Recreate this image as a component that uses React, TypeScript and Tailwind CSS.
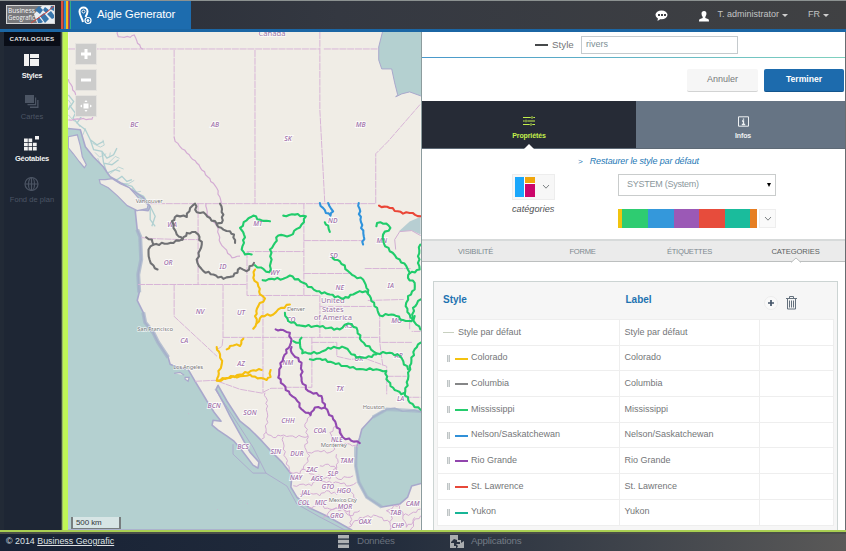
import React from "react";

const C = {
  green: "#20cc6b",
  grey: "#707174",
  yellow: "#f5bf0f",
  purple: "#9149b0",
  blue: "#2f93dc",
  red: "#ea4637",
};

/* Turns "x,y x,y" into a meandering path with small deterministic bends. */
function meander(points: string, amount = 3.2) {
  const p = points.split(" ").map((s) => s.split(",").map(Number));
  let d = `M${p[0][0]} ${p[0][1]}`;
  let k = 0;
  for (let i = 1; i < p.length; i++) {
    const [x0, y0] = p[i - 1];
    const [x1, y1] = p[i];
    const len = Math.hypot(x1 - x0, y1 - y0);
    const n = Math.max(1, Math.round(len / 9));
    for (let j = 1; j <= n; j++) {
      const t = j / n;
      const off = j === n ? 0 : Math.sin(k * 2.3 + i) * amount;
      const nx = len ? -(y1 - y0) / len : 0;
      const ny = len ? (x1 - x0) / len : 0;
      d += `L${(x0 + (x1 - x0) * t + nx * off).toFixed(1)} ${(y0 + (y1 - y0) * t + ny * off).toFixed(1)}`;
      k++;
    }
  }
  return d;
}

type Line = [string, string];

const westRivers: Line[] = [
  [C.grey, "258,113 275,120 280,135 330,130 367,120 380,100 405,97 415,105 425,135 415,160 412,190 430,215 460,225 490,238 520,230 540,205 560,215 582,190"],
  [C.grey, "280,135 265,150 268,180 280,198 292,210"],
  [C.grey, "367,120 350,105 340,85 335,65 350,48 380,52 390,25 405,12 410,38 430,38 450,55 470,72 485,70 490,45 480,12"],
  [C.grey, "470,75 490,90 510,95 522,105 525,130"],
  [C.yellow, "500,450 510,440 530,435 540,440 550,418"],
  [C.yellow, "470,443 480,465 485,495 475,515 475,530 470,544 540,526 580,513 605,512"],
  [C.yellow, "474,544 500,536 540,531 570,526 585,532 620,542 632,533 632,512"],
];

const eastRivers: Line[] = [
  [C.green, "130,48 165,45 198,50 185,75 150,108 115,108 105,130 90,150 95,180 88,218 45,197"],
  [C.green, "35,165 15,165 5,150 12,130 12,105 0,85 20,62 40,48 60,60 90,65"],
  [C.green, "68,242 95,238 130,238 150,228 190,250 230,275 270,285 310,298 340,285 360,275 385,280"],
  [C.green, "278,175 300,185 325,215 345,230 370,240 380,265 395,305 412,325 420,348 455,345 470,350 490,362 515,365 525,350"],
  [C.green, "255,68 265,78 270,97"],
  [C.green, "410,80 412,70 440,72 452,85 430,105 432,130 450,155 480,180 500,200 510,220 505,235 525,250 525,270 505,290 498,320 510,345 520,360 542,390"],
  [C.green, "542,135 535,170 540,210 510,222"],
  [C.green, "543,300 520,325 520,355"],
  [C.green, "135,340 145,365 180,378 240,382 300,390 325,372 350,385 365,425 410,462 450,460 480,470 505,510"],
  [C.green, "160,425 180,430 187,462 240,460 265,445 315,445 350,475 380,475 410,465"],
  [C.green, "185,415 180,430"],
  [C.green, "210,480 240,478 280,490 330,505 370,510 410,510 440,515 440,540 460,565 485,585 495,580 510,610 543,632"],
  [C.green, "543,430 525,450 510,500 505,540 495,585"],
  [C.yellow, "45,210 40,235 55,260 60,285 75,297 55,320 45,350 50,370 40,388"],
  [C.yellow, "50,372 65,350 100,345 115,330 150,315"],
  [C.purple, "107,390 130,392 150,400 153,430 130,475 118,510 115,535 150,585 172,605 185,630 212,648 225,625 255,625"],
  [C.purple, "155,443 155,460 185,490 185,545 205,575 245,590 255,625 280,660 310,715 360,732"],
  [C.blue, "240,10 258,40 272,48 280,35 265,10"],
  [C.blue, "357,10 362,60 372,110 370,135"],
  [C.red, "418,18 450,25 490,42 510,40 543,50"],
];

const straightBorders =
  "M68 49H320M324 49H379M174 50V138M255 50V204M320 32V110L325 204M150 204H376V154L388 142L421 104M141 238L152 239L182 240H198M198 204V285M138 285H247M174 285V317L217 357M223 285V338L222 347L217 350M223 338H380V343H413M247 252V296H304V204M247 252H304M304 296H320V338M320 307H372M304 241H365M304 274H352M365 269H411M368 301L404 300M380 313V343L383 366M263 296V394M263 393L271 389H283M312 338V388H285M312 343H337V357L350 360L365 359L387 367V395M387 377H407M195 382L215 381L240 390L263 394M405 398H421M410 315V330M421 332H412";

const wavyBorders = [
  "171,0 174,20 210,22 222,15 232,40 248,58",
  "342,322 345,335 380,370 410,400 470,475 484,520",
  "438,520 441,555 471,590 481,640 516,685 540,680",
  "24,148 46,195",
  "24,270 60,268 95,268 102,235",
];
const mexicoBorders = [
  "75,70 83,110 80,150 78,190 65,210",
  "78,188 100,205 122,200 140,202 205,202",
  "212,140 195,165 205,205 195,235 210,260 190,300 180,315 150,310",
  "130,202 130,240 150,310",
  "205,250 235,245 270,250 285,240 270,190 290,170 305,190 300,215",
  "300,220 330,225 355,235",
  "290,255 295,280 280,310 295,330 340,320",
  "240,290 265,285 290,300 270,330 220,315 185,300",
  "160,350 190,345 215,350 230,335 260,340 295,340 330,350 350,340",
  "180,375 220,375 240,380 260,365 290,375 330,365 350,390",
  "205,415 240,410 270,420 310,420 330,440 360,425",
  "250,445 280,420 330,425 335,470",
  "325,475 360,445 410,440 450,460",
  "450,485 455,440 440,425 480,405",
  "480,410 490,440 530,430 543,420",
  "490,440 500,475 543,440",
  "525,445 515,490",
];

const coast =
  "M60 128L80 130L85 147L93 157L103 167L107 173L110 177L127 187L143 198L150 207L148 211L140 210L135 211L137 230L140 237L141 260L138 275L139 293L137 301L143 313L145 323L153 333L158 343L168 358L170 365L177 368L188 370L195 382L201 392L207 402L214 413L221 422L213 421L212 426L218 431L227 437L234 442L241 450L253 466L258 469L259 463L250 453L240 435L230 417L223 403L216 390L218 386L227 402L240 422L250 430L262 442L272 453L282 463L292 476L291 488L297 498L310 509L327 517L352 531H60Z";
const gulf =
  "M423 413L415 411L403 412L395 409L387 410L373 418L362 430L360 438L357 447L356 467L359 483L367 498L382 508L400 505L408 498L412 487L423 484Z";

const labels: [string, number, number][] = [
  ["BC", 134, 125], ["AB", 215, 125], ["SK", 288, 139], ["MB", 361, 125],
  ["WA", 172, 225], ["OR", 168, 263], ["ID", 223, 267], ["NV", 200, 312], ["CA", 184, 341],
  ["UT", 241, 313], ["MT", 258, 224], ["ND", 333, 221], ["SD", 334, 256], ["WY", 275, 273],
  ["NE", 340, 288], ["IA", 391, 286], ["MN", 382, 241], ["CO", 291, 320], ["MO", 397, 321],
  ["KS", 349, 326], ["AZ", 241, 364], ["NM", 288, 363], ["OK", 359, 359], ["AR", 399, 356],
  ["TX", 340, 389], ["LA", 401, 399], ["BCN", 214, 406], ["BCS", 243, 447], ["SON", 250, 413],
  ["CHH", 288, 421], ["COA", 320, 431], ["NLE", 337, 440], ["SIN", 276, 452], ["DUR", 297, 454],
  ["TAM", 347, 461], ["ZAC", 312, 470], ["SLP", 333, 474], ["NAY", 296, 478], ["AGS", 317, 479],
  ["GTO", 328, 487], ["HGO", 344, 491], ["JAL", 306, 493], ["COL", 304, 503], ["MIC", 321, 503],
  ["MOR", 345, 507], ["GRO", 337, 516], ["OAX", 365, 522], ["TAB", 396, 513], ["CHP", 398, 526],
  ["CAM", 413, 504],
];
const cities: [string, number, number, number][] = [
  ["Vancouver", 149, 203, 27], ["San Francisco", 155, 332, 36], ["Los Angeles", 188, 370, 30],
  ["Denver", 296, 312, 18], ["Houston", 374, 410, 22], ["Monterrey", 334, 448, 26], ["Mexico City", 343, 503, 28],
];

function MapView() {
  const inlets =
    "M24 195L40 215L30 230L45 250L38 265L60 290M30 225L24 240M45 250L62 262L50 280L75 300L90 330L110 345L130 335M90 330L100 360L125 365L140 385L160 375L170 355M125 365L130 400L155 405L175 390M130 400L140 430L165 420L180 425M140 445L170 450L185 440L200 455L215 450M185 460L215 470L230 490L250 500L270 530L285 560L275 590M255 510L270 540L270 570L285 590";
  const fjords =
    "M24 210L34 225M50 240L58 250M24 255L42 275M75 295L68 315M96 340L120 352L132 346L128 330M104 368L118 382L138 372M148 382L150 368M112 385L128 420M145 400L165 380L178 386M150 432L175 412L190 418M165 455L180 462L205 462L222 452M215 475L225 488L242 485";
  return (
    <svg className="block h-full w-full" viewBox="68 32 353 499" fontFamily="'Noto Sans', 'Open Sans', sans-serif">
      <rect x="68" y="32" width="353" height="499" fill="#f0ede6" />
      <g transform="translate(60 30) scale(.33333)" fill="none" stroke="#b0d0d1">
        <path d={inlets} strokeWidth="4" />
        <path d={fjords} strokeWidth="2.5" />
      </g>
      <g fill="#b4d0d0" stroke="#a9a8cc" strokeWidth="1.6" strokeLinejoin="round">
        <path d={coast} />
        <path d={gulf} />
        <path d="M383 31L379 47L379 60L382 69L392 69L395 83L398 95L396 97L402 94L410 92L421 96H424V31Z" strokeWidth="1" />
      </g>
      <path d="M399 232L410 222L421 217V235L412 231Z" fill="#a9c5cd" opacity=".8" />
      <path d="M396 250L395 240L400 232L412 231L421 236" fill="none" stroke="#d0aed2" />
      <g fill="#f0ede6" stroke="#a9a8cc" strokeWidth="1.2">
        <path d="M68 137L77 135L80 146L82 157L86 165L84 168L79 162L73 154L68 148Z" />
        <path d="M105 180L112 179L120 184L129 188L138 198L148 205L147 209L137 211L127 206L117 196L108 188L100 184L99 180Z" />
        <path d="M174 374L180 373L184 376M185 378L189 378L188 382L185 380Z" />
      </g>
      <path d="M188 414l1 1M217 510l1 1M247 504l1 1" stroke="#c5bfd0" />
      <path d="M143 313L145 323L153 333L158 343L168 358M137 230L140 237L141 260L138 275L139 293" fill="none" stroke="#a5b3c9" strokeWidth="4" opacity=".75" />
      <path d="M356 447L356 467L359 483L367 498L382 508M373 418L387 410L405 411L420 412" fill="none" stroke="#a5b8cb" strokeWidth="3.5" opacity=".7" />
      <path d="M215 390L225 405L238 425L253 448L266 474H253L233 455V445" fill="none" stroke="#a9a3cc" strokeWidth=".8" />
      <path d="M266 474L287 487L297 505L320 518L345 531" fill="none" stroke="#a9a3cc" strokeWidth=".8" />
      <path d={straightBorders} fill="none" stroke="#d8b5d7" strokeWidth="1" strokeDasharray="7 .8" />
      <g transform="translate(60 30) scale(.33333)" fill="none" stroke="#d4acd4" strokeWidth="3.6">
        {wavyBorders.map((b) => (
          <path key={b} d={meander(b, 2)} />
        ))}
      </g>
      <g transform="translate(240 370) scale(.33333)" fill="none" stroke="#d4acd4" strokeWidth="3">
        {mexicoBorders.map((b) => (
          <path key={b} d={meander(b, 4)} />
        ))}
      </g>
      <g fontSize="6.8" fontStyle="italic" fontWeight="500" fill="#a070aa" stroke="#fff" strokeWidth="1.8" strokeOpacity=".8" paintOrder="stroke" textAnchor="middle">
        {labels.map(([t, x, y]) => (
          <text key={t} x={x} y={y + 2.6}>{t}</text>
        ))}
      </g>
      <g fontSize="7.6" fill="#9a74a4" stroke="#fff" strokeWidth="1.5" strokeOpacity=".8" paintOrder="stroke" textAnchor="middle">
        <text x="272" y="36">Canada</text>
        <text x="333" y="304">United</text>
        <text x="333" y="312.5">States</text>
        <text x="333" y="321">of America</text>
      </g>
      <g fill="none" strokeWidth="6.3" strokeLinejoin="round" strokeLinecap="round">
        <g transform="translate(60 200) scale(.33333)">
          {westRivers.map(([c, p]) => <path key={p} d={meander(p)} stroke={c} />)}
        </g>
        <g transform="translate(240 200) scale(.33333)">
          {eastRivers.map(([c, p]) => <path key={p} d={meander(p)} stroke={c} />)}
        </g>
      </g>
      <g fontSize="6" fill="#777" stroke="#fff" strokeWidth="1.3" strokeOpacity=".7" paintOrder="stroke" textAnchor="middle">
        {cities.map(([t, x, y, w]) => (
          <text key={t} x={x} y={y} textLength={w}>{t}</text>
        ))}
      </g>
    </svg>
  );
}

function MapButton({ children }: { children: React.ReactNode }) {
  return (
    <div className="flex h-[22px] w-[22px] items-center justify-center border border-[#e5e3df] bg-[#cccccb]">
      <svg width="20" height="20" viewBox="0 0 20 20" fill="#fff">{children}</svg>
    </div>
  );
}

function SideItem({ label, active, children }: { label: string; active?: boolean; children: React.ReactNode }) {
  return (
    <div className={`flex h-[41.4px] flex-col items-center ${active ? "text-[#f2f2f2]" : "text-[#4c5564]"}`}>
      <svg width="16" height="16" viewBox="0 0 16 16" fill="currentColor">{children}</svg>
      <span className={`mt-[3px] whitespace-nowrap text-[7.5px] leading-[10px] ${active ? "font-bold tracking-[-0.25px]" : "tracking-[0.05px]"}`}>{label}</span>
    </div>
  );
}

function Sidebar() {
  return (
    <aside className="flex w-[61px] shrink-0 bg-[#1e2634]">
      <div className="w-1 shrink-0 bg-[#222a36]" />
      <div className="flex-1 pr-px">
        <div className="flex h-[14px] items-center justify-center bg-[#090d17] text-[6.2px] font-bold tracking-[0.25px] text-[#e4e4e4]">CATALOGUES</div>
        <div className="pt-[6px]">
          <SideItem label="Styles" active>
            <path d="M0 2H5V14H0ZM6 2H15V6H6ZM6 7H15V14H6Z" />
          </SideItem>
          <SideItem label="Cartes">
            <path d="M1 2H10V10H1ZM11 4.500H12.200V12.200H3.500V11H11ZM13.200 7H14.500V15H6V13.500H13.200Z" />
          </SideItem>
          <SideItem label="Géotables" active>
            <path d="M0 3.500H3.800V7H0ZM4.500 3.500H8.200V7H4.500ZM0 7.700H3.800V11.300H0ZM4.500 7.700H8.200V11.300H4.500ZM9 7.700H12.700V11.300H9ZM0 12H3.800V15.500H0ZM4.500 12H8.200V15.500H4.500ZM9 12H12.700V15.500H9ZM11 1H15V4.500H11Z" />
          </SideItem>
          <SideItem label="Fond de plan">
            <g fill="none" stroke="currentColor" strokeWidth="1.200">
              <circle cx="7.500" cy="8" r="6.500" />
              <ellipse cx="7.500" cy="8" rx="3" ry="6.500" />
              <path d="M7.500 1.500V14.500M1 8H14" />
            </g>
          </SideItem>
        </div>
      </div>
    </aside>
  );
}

function Caret() {
  return <span className="inline-block border-x-[3.5px] border-t-[3.5px] border-x-transparent border-t-[#cfcfcf]" />;
}

function Header() {
  return (
    <header className="flex h-8 shrink-0 border-t border-b-[3px] border-t-[#8c9291] border-b-[#1b66a4] bg-gradient-to-r from-[#262b35] via-[#343841] via-40% to-[#404143]">
      <div className="w-[61px] pt-1 pl-[6px]">
        <svg width="49" height="19" viewBox="0 0 49 19">
          <rect width="49" height="19" fill="#d4d4d4" />
          <rect x="1" y="1" width="47" height="17" fill="#77787b" />
          <path d="M28 9L36 1H48V18H31Z" fill="#e9eef2" />
          <path d="M33 1L37 5L34 9L29 5ZM39 2L43 5L40 8L37 5ZM45 1H48V6L44 4ZM41 9L45 6L48 10V13L46 14ZM34 11L38 8L43 14L39 18ZM31 14L33 12L37 17L35 18H32Z" fill="#3976ac" />
          <path d="M25 18L41 7L48 1" fill="none" stroke="#d4483d" />
          <text x="2" y="8" fontSize="7" textLength="27" lengthAdjust="spacingAndGlyphs" fontFamily="'Open Sans', sans-serif" fill="#f5f5f5">Business</text>
          <text x="2" y="15" fontSize="7" textLength="27" lengthAdjust="spacingAndGlyphs" fontFamily="'Open Sans', sans-serif" fill="#f5f5f5">Geografic</text>
        </svg>
      </div>
      <div className="flex w-[10px]">
        <i className="w-[2px] bg-[#dc4e3c]" />
        <i className="w-px bg-[#75454e]" />
        <i className="w-[2px] bg-[#2b8dcb]" />
        <i className="w-[2px] bg-[#f1bf1d]" />
        <i className="w-px bg-[#c14643]" />
        <i className="w-px bg-[#5b4b9e]" />
        <i className="w-px bg-[#2daa88]" />
      </div>
      <div className="flex w-[120px] items-center bg-[#1d6cae] pl-[7px] text-[11.5px] tracking-[-0.15px] text-white">
        <svg className="mr-[5px]" width="14" height="19" viewBox="0 0 14 19" fill="none" stroke="#fff">
          <path d="M5 16C4 12 1.500 9 1.500 5.500A4 4 0 0 1 9.500 5.500C9.500 7.500 8.500 9 7.500 11" strokeWidth="2" />
          <circle cx="5.500" cy="5.500" r="1.500" fill="#16558c" strokeWidth="1" />
          <circle cx="10" cy="14.500" r="3" strokeWidth="1.200" />
          <circle cx="10" cy="14.500" r="1" fill="#fff" />
        </svg>
        <span className="whitespace-nowrap pb-px">Aigle Generator</span>
      </div>
      <div className="flex flex-1 items-center justify-end pr-[17px] text-[9px] text-[#c2c3c4]">
        <svg className="mr-[31px]" width="13" height="11" viewBox="0 0 13 11">
          <ellipse cx="6.500" cy="4.800" rx="6" ry="4.400" fill="#fff" />
          <path d="M3 8L2.500 11L7 8Z" fill="#fff" />
          <path d="M3 4H5V6H3ZM6 4H8V6H6ZM9 4H11V6H9Z" fill="#424347" />
        </svg>
        <svg className="mt-[2px] mr-2" width="10" height="11" viewBox="0 0 10 11" fill="#fff">
          <path d="M5 0C7 0 7.700 1.500 7.400 3.300C7.200 4.500 6.600 5.500 6.300 6V7L9 8C9.700 8.300 10 9 10 10.500H0C0 9 .3 8.300 1 8L3.700 7V6C3 5 2.500 4 2.500 2.800C2.500 1 3.500 0 5 0Z" />
        </svg>
        <span className="mr-[3px] text-[9px] whitespace-nowrap">T. administrator</span>
        <Caret />
        <span className="mr-[3px] ml-5 text-[9px]">FR</span>
        <Caret />
      </div>
    </header>
  );
}

const rows: [string, string][] = [
  ["Style par défaut", "bg-[#c8d0c0]"],
  ["Colorado", "bg-[#f4c20f]"],
  ["Columbia", "bg-[#858687]"],
  ["Mississippi", "bg-[#25cc6d]"],
  ["Nelson/Saskatchewan", "bg-[#3090d8]"],
  ["Rio Grande", "bg-[#9145ad]"],
  ["St. Lawrence", "bg-[#e74839]"],
  ["Yukon", "bg-[#17b596]"],
];

function Chevron() {
  return (
    <svg width="8" height="6" viewBox="0 0 8 6" fill="none" stroke="#7d8284">
      <path d="M1 1L4 4.200L7 1" />
    </svg>
  );
}

function StylePanel() {
  return (
    <section className="flex flex-1 flex-col overflow-hidden bg-white">
      <div className="flex h-[25px] shrink-0 items-center pt-px pl-[113px]">
        <span className="mr-1 h-[2px] w-[13px] bg-[#46494b]" />
        <span className="w-[29px] text-[9.8px] text-[#747678]">Style</span>
        <div className="flex h-[18px] w-[157px] items-center border border-[#c5cacd] pl-1 text-[9px] text-[#7d9095]">rivers</div>
      </div>
      <div className="h-px shrink-0 bg-gradient-to-r from-[#4998cb] to-[#80d1be]" />
      <div className="flex h-[43px] shrink-0 items-center justify-end gap-[6px] pt-px pr-px text-[9px]">
        <div className="flex h-[23px] w-[71px] items-center justify-center rounded-[2px] border-b border-[#d2d3d3] bg-[#f6f6f6] text-[#77797b]">Annuler</div>
        <div className="flex h-[23px] w-[80px] items-center justify-center rounded-[2px] border-b border-[#13558d] bg-[#1d6bad] text-[8.6px] font-bold text-white">Terminer</div>
      </div>
      <div className="flex h-12 shrink-0 border-b border-[#5e6a76] text-[7px] font-bold">
        <div className="relative flex w-[214px] flex-col items-center bg-[#262b36] pt-[15px] text-[#c4f04c]">
          <svg width="12" height="10" viewBox="0 0 12 10" fill="none" stroke="currentColor">
            <path d="M0 1.500H12M0 5H12M0 8.500H12" strokeWidth="1.200" />
            <path d="M9 0V3M3 3.500V6.500M8 7V10" stroke="#262b36" strokeWidth="2.500" />
            <path d="M9 .2V2.800M3 3.700V6.300M8 7.200V9.800" />
          </svg>
          <span className="mt-[4px] leading-[11px] tracking-[-0.1px]">Propriétés</span>
          <svg className="absolute -bottom-px left-[102px]" width="10" height="5" viewBox="0 0 10 5">
            <path d="M5 0L10 5H0Z" fill="#fff" />
          </svg>
        </div>
        <div className="flex flex-1 flex-col items-center bg-[#667484] pt-[15px] pl-[5px] text-[#eef1f3]">
          <svg width="11" height="11" viewBox="0 0 11 11" fill="none" stroke="currentColor">
            <path d="M.5 .8H10.500V10.200H.5Z" />
            <path d="M4 5H5.500V8.500M3.800 8.500H7.200M5.500 2.500V3.700" strokeWidth="1.300" />
          </svg>
          <span className="mt-[3px] leading-[11px] tracking-[-0.1px]">Infos</span>
        </div>
      </div>
      <div className="flex h-[90px] shrink-0 flex-col">
        <div className="flex h-[25px] items-center pt-px pl-[156px] text-[9px] text-[#2478b5] italic">
          <span className="mr-[7px] text-[8px]">&gt;</span>
          <span className="tracking-[-0.13px]">Restaurer le style par défaut</span>
        </div>
        <div className="flex">
          <div className="ml-[90px] w-[43px]">
            <div className="flex h-[26px] w-[43px] items-center border border-[#ededed] bg-[#f7f7f7] pl-[2px]">
              <div className="flex h-5 w-5 gap-px bg-white">
                <div className="w-[9px] bg-[#1aa7fb]" />
                <div className="flex w-[10px] flex-col gap-px">
                  <div className="h-[6px] bg-[#f0a60d]" />
                  <div className="h-[13px] bg-[#cc066b]" />
                </div>
              </div>
              <span className="ml-[7px]"><Chevron /></span>
            </div>
            <div className="mt-[3px] text-[9.2px] leading-[12px] text-[#4f5254] italic">catégories</div>
          </div>
          <div className="ml-[63px] w-[158px]">
            <div className="flex h-[22px] items-center justify-between border border-[#c9cccc] pr-1 pl-2 text-[9px] text-[#8a979c]">
              <span className="tracking-[-0.25px]">SYSTEM (System)</span>
              <span className="border-x-[2.5px] border-t-[4px] border-x-transparent border-t-black" />
            </div>
            <div className="mt-[13px] flex h-[19px]">
              <i className="w-1 bg-[#f1c40f]" />
              <i className="w-[26px] bg-[#2ecc71]" />
              <i className="w-[26px] bg-[#3498db]" />
              <i className="w-[25px] bg-[#9b59b6]" />
              <i className="w-[26px] bg-[#e74c3c]" />
              <i className="w-[25px] bg-[#1abc9c]" />
              <i className="w-[7px] bg-[#e67e22]" />
              <div className="ml-[2px] flex w-[17px] items-center justify-center border border-[#eeeeee] bg-[#fafafa]"><Chevron /></div>
            </div>
          </div>
        </div>
      </div>
      <div className="flex h-[23px] shrink-0 items-center border-t-2 border-b border-t-[#d7dada] border-b-[#bcbfbf] bg-[#ebebeb] pt-px text-[7.6px] tracking-[-0.25px] text-[#7d898f]">
        <span className="w-[107px] text-center">VISIBILITÉ</span>
        <span className="w-[107px] text-center">FORME</span>
        <span className="w-[107px] text-center">ÉTIQUETTES</span>
        <span className="relative flex-1 pl-[3px] text-center tracking-[-0.1px] text-[#5a5f61]">
          CATEGORIES
          <svg className="absolute top-[11px] left-[48px]" width="10" height="6" viewBox="0 0 10 6">
            <path d="M0 5.500L5 1L10 5.500" fill="#fff" stroke="#bcbfbf" />
          </svg>
        </span>
      </div>
      <div className="mt-[19px] mr-[7px] ml-[11px] flex-1 border border-b-0 border-[#ccd4d3] bg-[#f6f6f6] px-[3px]">
        <div className="grid h-[37px] grid-cols-[182.5px_139px_1fr] text-[10px] font-bold text-[#1e73b1]">
          <span className="pt-[10px] pl-[6px]">Style</span>
          <span className="pt-[10px] pl-[6px]">Label</span>
          <span className="flex items-center gap-[8px] pt-[5px] pl-[5px]">
            <svg width="14" height="14" viewBox="0 0 14 14">
              <circle cx="7" cy="7" r="6.500" fill="#f9f9f9" stroke="#ececec" />
              <path d="M7 4V10M4 7H10" stroke="#45566a" strokeWidth="1.700" />
            </svg>
            <svg width="11" height="14" viewBox="0 0 11 14" fill="none" stroke="#65717d">
              <path d="M0 2.500H11M3.500 2V.5H7.500V2M1.500 3V13H9.500V3M3.500 4.500V11.500M5.500 4.500V11.500M7.500 4.500V11.500" />
            </svg>
          </span>
        </div>
        <div className="border-t border-[#eeeeee]">
          {rows.map(([name, color], i) => (
            <div key={name} className="grid h-[25.7px] grid-cols-[182.5px_139px_1fr] border-b border-[#eeeeee] bg-white text-[9px] text-[#747678]">
              <div className="flex items-center border-x border-[#eeeeee] pl-[5px]">
                {i > 0 && <span className="mr-[5px] ml-[4px] h-[7px] w-[3px] border-x border-[#bfc5c6] bg-[#dfe1e1]" />}
                <span className={`mt-px shrink-0 ${i ? "mr-[3px] h-[2px] w-[13px]" : "mr-[4px] h-px w-[11px]"} ${color}`} />
                {name}
              </div>
              <div className="flex items-center pl-[5px]">{name}</div>
              <div className="border-x border-[#eeeeee]" />
            </div>
          ))}
        </div>
      </div>
    </section>
  );
}

export default function App() {
  return (
    <div className="flex h-[551px] w-[846px] flex-col overflow-hidden bg-white font-['Liberation_Sans',Arial,sans-serif]">
      <Header />
      <main className="flex h-[498px] shrink-0">
        <Sidebar />
        <div className="w-px bg-[#485440]" />
        <div className="w-[6px] bg-[#c0f656] shadow-[inset_1px_0_#9bbb6b]" />
        <div className="relative w-[353px] overflow-hidden">
          <MapView />
          <div className="absolute top-[11px] left-[7px] flex flex-col gap-1">
            <MapButton><path d="M8.500 5H11.500V8.500H15V11.500H11.500V15H8.500V11.500H5V8.500H8.500Z" /></MapButton>
            <MapButton><path d="M5 8.500H15V11.500H5Z" /></MapButton>
            <MapButton><path d="M7.500 7.500H12.500V12.500H7.500ZM10 4L11.500 6H8.500ZM10 16L11.500 14H8.500ZM4 10L6 8.500V11.500ZM16 10L14 8.500V11.500Z" /></MapButton>
          </div>
          <div className="absolute bottom-px left-[3px] flex h-[12px] w-[50px] items-center border-2 border-t-0 border-b border-[#777d7e] bg-[#d7e5e5] pl-[3px] text-[8px] tracking-[-0.1px] text-[#34383b]">500 km</div>
        </div>
        <div className="w-px bg-[#8c9c9e]" />
        <StylePanel />
        <div className="w-px bg-[#686c70]" />
      </main>
      <footer className="flex h-[21px] shrink-0 items-center border-t-2 border-[#a9cf52] bg-gradient-to-r from-[#182235] via-[#222c3c] via-45% to-[#5a5958] text-[9px] shadow-[inset_0_2px_#4b5048]">
        <span className="w-[338px] pl-[6px] text-[8.9px] text-[#dfe1e4]">© 2014 <u>Business Geografic</u></span>
        <span className="flex w-[112px] items-center text-[#69717d]">
          <svg className="mr-[8px]" width="11" height="13" viewBox="0 0 11 13" fill="#aeb1b4"><path d="M0 0H11V3.500H0ZM0 4.700H11V8.200H0ZM0 9.400H11V13H0Z" /></svg>
          <span className="text-[9.8px] tracking-[-0.2px]">Données</span>
        </span>
        <span className="flex items-center text-[#737b85]">
          <svg className="mr-[6px]" width="15" height="15" viewBox="0 0 15 15" fill="#a9acae"><path d="M0 1H8V6H11V9L14 7V14H7L8 12L6 10H10V8H7V6L4 5L1 8V9H4V12H6V14H0Z" /></svg>
          <span className="text-[9.8px] tracking-[-0.2px]">Applications</span>
        </span>
      </footer>
    </div>
  );
}
